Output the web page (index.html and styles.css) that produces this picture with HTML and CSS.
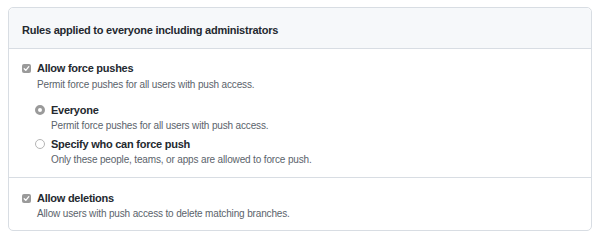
FILE: index.html
```html
<!DOCTYPE html>
<html lang="en">
<head>
  <meta charset="UTF-8">
  <title>Branch protection rules</title>
  <link rel="stylesheet" href="styles.css">
</head>
<body>

<div class="box">
  <div class="box-header">Rules applied to everyone including administrators</div>

  <div class="box-row">
    <div class="option">
      <span class="check"><svg width="9" height="9" viewBox="0 0 9 9"><path d="M2.2 4.7l1.6 1.6 3-3.6" fill="none" stroke="#fff" stroke-width="1.3" stroke-linecap="round" stroke-linejoin="round"/></svg></span>
      <div>
        <div class="label">Allow force pushes</div>
        <div class="note">Permit force pushes for all users with push access.</div>
      </div>
    </div>

    <div class="choices">
      <div class="option">
        <span class="radio checked"></span>
        <div>
          <div class="label">Everyone</div>
          <div class="note">Permit force pushes for all users with push access.</div>
        </div>
      </div>
      <div class="option">
        <span class="radio"></span>
        <div>
          <div class="label">Specify who can force push</div>
          <div class="note">Only these people, teams, or apps are allowed to force push.</div>
        </div>
      </div>
    </div>
  </div>

  <div class="box-row last">
    <div class="option">
      <span class="check"><svg width="9" height="9" viewBox="0 0 9 9"><path d="M2.2 4.7l1.6 1.6 3-3.6" fill="none" stroke="#fff" stroke-width="1.3" stroke-linecap="round" stroke-linejoin="round"/></svg></span>
      <div>
        <div class="label">Allow deletions</div>
        <div class="note">Allow users with push access to delete matching branches.</div>
      </div>
    </div>
  </div>
</div>

</body>
</html>
```

FILE: styles.css
```css
body {
  margin: 0;
  padding: 7px 8px;
  background: #fff;
  font-family: "Liberation Sans", Arial, sans-serif;
  color: #24292f;
}

.box {
  border: 1px solid #d8dde3;
  border-radius: 5px;
  box-sizing: border-box;
  height: 224px;
}

.box-header {
  background: #f6f8fa;
  border-bottom: 1px solid #d8dde3;
  border-radius: 5px 5px 0 0;
  height: 41px;
  box-sizing: border-box;
  padding: 15px 13px 0;
  font-size: 11px;
  line-height: 15px;
  letter-spacing: -0.23px;
  font-weight: bold;
}

.box-row {
  padding: 12px 13px 10px;
  border-bottom: 1px solid #d8dde3;
}

.box-row.last {
  border-bottom: none;
  padding-top: 13px;
}

.option {
  display: flex;
  align-items: flex-start;
}

.label {
  font-size: 11px;
  line-height: 15px;
  letter-spacing: -0.25px;
  font-weight: bold;
}

.note {
  font-size: 10px;
  line-height: 15px;
  letter-spacing: -0.15px;
  color: #5b636b;
}

.box-row > .option .note {
  margin-top: 1px;
}

.box-row.last > .option .note {
  margin-top: 0;
}

.check {
  width: 9px;
  height: 9px;
  border-radius: 2px;
  background: #9a9a9a;
  margin: 3px 6px 0 0;
  flex-shrink: 0;
  display: flex;
}

.choices {
  padding-left: 13px;
  margin-top: 11px;
}

.choices .option + .option {
  margin-top: 4px;
}

.radio {
  width: 10px;
  height: 10px;
  box-sizing: border-box;
  border-radius: 50%;
  border: 1px solid #b5b5b5;
  background: #fff;
  margin: 2px 6px 0 0;
  flex-shrink: 0;
}

.radio.checked {
  border: 3px solid #9a9a9a;
  background: #fff;
}
```
